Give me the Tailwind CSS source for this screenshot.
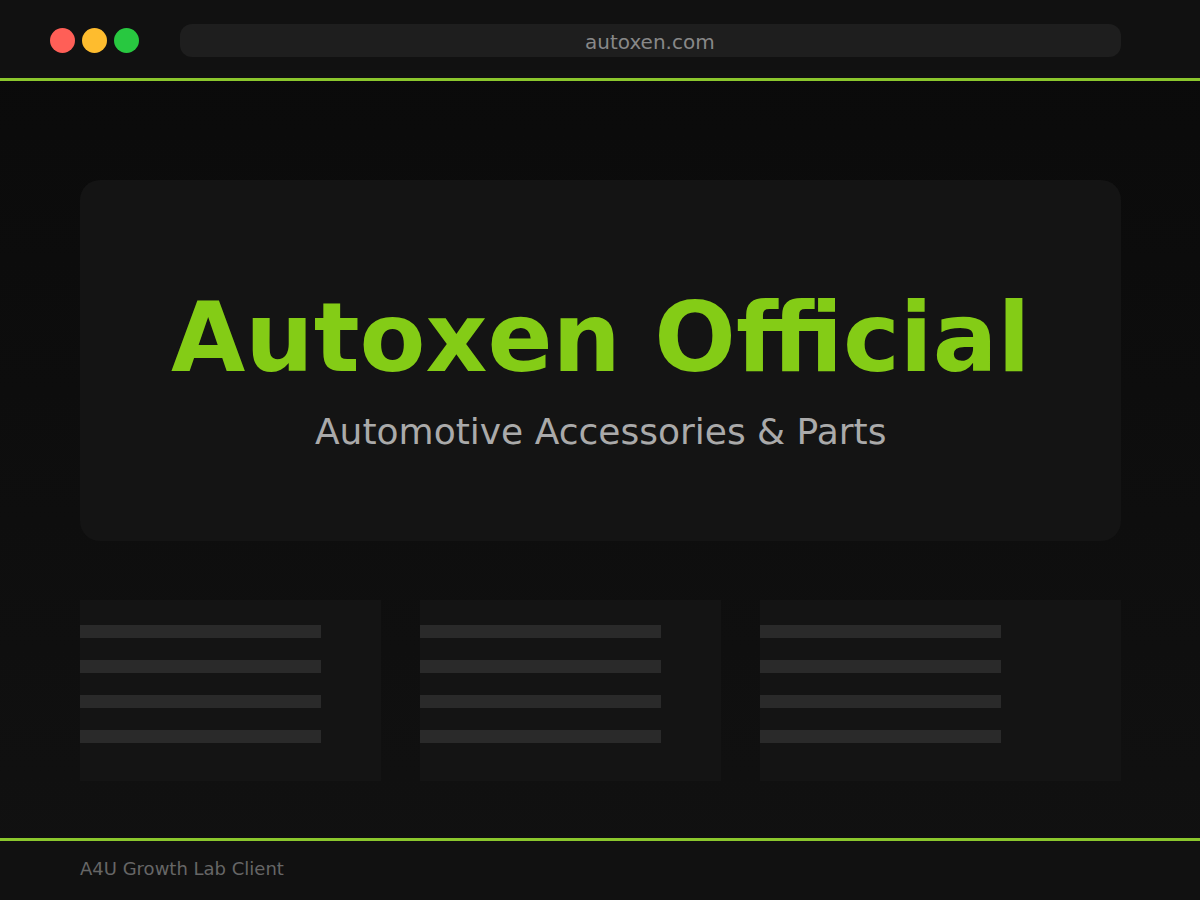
<!DOCTYPE html>
<html>
<head>
<meta charset="utf-8">
<script src="https://cdn.jsdelivr.net/npm/@tailwindcss/browser@4"></script>
</head>
<body class="m-0 bg-[#111111]">
<div class="flex h-[900px] w-[1200px] flex-col overflow-hidden bg-gradient-to-b from-[#0a0a0a] to-[#111111] font-['DejaVu_Sans',sans-serif]">
  <header class="flex h-[81px] shrink-0 items-start border-b-[3px] border-[#8bc72d] bg-[#111111] pl-[50px] pr-[79px]">
    <div class="mt-[28px] flex gap-[7px]">
      <span class="h-[25px] w-[25px] rounded-full bg-[#ff5f57]"></span>
      <span class="h-[25px] w-[25px] rounded-full bg-[#febc2e]"></span>
      <span class="h-[25px] w-[25px] rounded-full bg-[#28c840]"></span>
    </div>
    <div class="ml-[41px] mt-[24px] flex h-[33px] w-[941px] items-center justify-center rounded-[12px] bg-[#1e1e1e] pr-[2px] pt-[3px] text-[20px] text-[#888888]"><span class="rotate-[0.02deg]">autoxen.com</span></div>
  </header>
  <main class="flex flex-1 flex-col pl-[80px] pr-[79px] pt-[99px]">
    <section class="flex h-[361px] flex-col items-center rounded-[20px] bg-[#141414] pt-[102px]">
      <h1 class="rotate-[0.001deg] text-[96px] font-bold leading-[112px] text-[#84cc16]">Autoxen Official</h1>
      <p class="mt-[17px] rotate-[0.02deg] text-[36px] leading-[42px] text-[#aaaaaa]">Automotive Accessories &amp; Parts</p>
    </section>
    <section class="mt-[59px] flex h-[181px] gap-[39px]">
      <div class="flex w-[301px] flex-col gap-[22px] bg-[#141414] pt-[25px]">
        <div class="h-[13px] w-[241px] bg-[#2a2a2a]"></div>
        <div class="h-[13px] w-[241px] bg-[#2a2a2a]"></div>
        <div class="h-[13px] w-[241px] bg-[#2a2a2a]"></div>
        <div class="h-[13px] w-[241px] bg-[#2a2a2a]"></div>
      </div>
      <div class="flex w-[301px] flex-col gap-[22px] bg-[#141414] pt-[25px]">
        <div class="h-[13px] w-[241px] bg-[#2a2a2a]"></div>
        <div class="h-[13px] w-[241px] bg-[#2a2a2a]"></div>
        <div class="h-[13px] w-[241px] bg-[#2a2a2a]"></div>
        <div class="h-[13px] w-[241px] bg-[#2a2a2a]"></div>
      </div>
      <div class="flex w-[361px] flex-col gap-[22px] bg-[#141414] pt-[25px]">
        <div class="h-[13px] w-[241px] bg-[#2a2a2a]"></div>
        <div class="h-[13px] w-[241px] bg-[#2a2a2a]"></div>
        <div class="h-[13px] w-[241px] bg-[#2a2a2a]"></div>
        <div class="h-[13px] w-[241px] bg-[#2a2a2a]"></div>
      </div>
    </section>
  </main>
  <footer class="flex h-[62px] shrink-0 items-center border-t-[3px] border-[#8bc72d] bg-[#111111] pb-[4px] pl-[80px] text-[18px] text-[#666666]"><span class="rotate-[0.02deg]">A4U Growth Lab Client</span></footer>
</div>
</body>
</html>
